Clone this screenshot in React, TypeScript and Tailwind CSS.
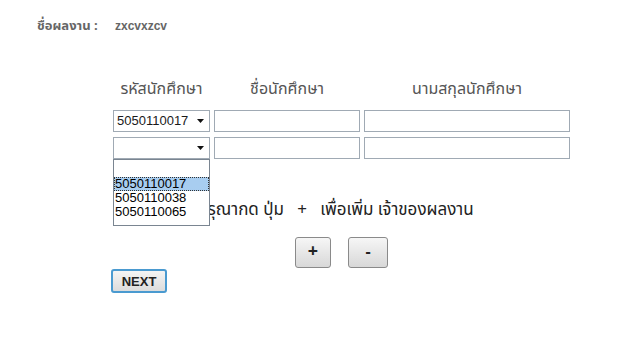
import React from 'react';

const Caret: React.FC = () => (
    <svg width="7" height="4" viewBox="0 0 7 4" className="shrink-0">
        <path d="M0 0h7L3.5 4z" fill="#111" />
    </svg>
);

const SelectBox: React.FC<{ value?: string }> = ({ value }) => (
    <div className="h-[22px] border border-[#a0aab4] bg-white flex items-center justify-between pl-[3px] pr-[5px] text-[13px] text-[#1a1a1a] font-['Liberation_Sans',sans-serif]">
        <span>{value ?? ''}</span>
        <Caret />
    </div>
);

const TextBox: React.FC = () => <div className="h-[22px] border border-[#a0aab4] bg-white" />;

const options = ['5050110017', '5050110038', '5050110065'];

const App: React.FC = () => {
    return (
        <div className="w-[620px] h-[346px] bg-white font-['Tahoma','Noto_Sans_Thai','Noto_Sans',sans-serif] text-[#333] overflow-hidden">
            <div className="flex items-baseline pl-[37px] pt-[17px] font-bold text-[#666]">
                <span className="w-[78px] text-[13px]">ชื่อผลงาน :</span>
                <span className="text-[12px] font-['Liberation_Sans',sans-serif]">zxcvxzcv</span>
            </div>

            <div className="ml-[113px] mt-[39px] w-[457px]">
                <div className="grid grid-cols-[97px_146px_206px] gap-x-[4px] text-[16px] text-[#555] text-center h-[26px] leading-[26px]">
                    <span>รหัสนักศึกษา</span>
                    <span>ชื่อนักศึกษา</span>
                    <span>นามสกุลนักศึกษา</span>
                </div>

                <div className="mt-[8px] grid grid-cols-[97px_146px_206px] gap-x-[4px] gap-y-[5px]">
                    <SelectBox value="5050110017" />
                    <TextBox />
                    <TextBox />
                    <div className="relative">
                        <SelectBox />
                        <div className="absolute left-0 top-[22px] w-[97px] h-[67px] border border-[#7a8591] bg-white text-[13px] leading-[14px] text-black z-10 font-['Liberation_Sans',sans-serif]">
                            <div className="h-[17px]" />
                            {options.map((o, i) => (
                                <div
                                    key={o}
                                    className={
                                        i === 0
                                            ? 'h-[14px] px-[1px] bg-[#a8cdf0] outline-1 outline-dotted outline-[#333] -outline-offset-1'
                                            : 'h-[14px] px-[1px]'
                                    }
                                >
                                    {o}
                                </div>
                            ))}
                        </div>
                    </div>
                    <TextBox />
                    <TextBox />
                </div>

                <p className="mt-[39px] pr-[12px] text-center text-[17px] text-[#222] leading-[24px]">
                    กรุณากด ปุ่ม &nbsp; + &nbsp; เพื่อเพิ่ม เจ้าของผลงาน
                </p>

                <div className="mt-[15px] flex justify-center gap-[17px]">
                    <button className="w-[36px] h-[31px] rounded-[3px] border border-[#8a8a8a] bg-gradient-to-b from-[#f6f6f6] to-[#d8d8d8] text-[18px] font-bold text-[#222] leading-none">
                        +
                    </button>
                    <button className="w-[40px] h-[31px] rounded-[3px] border border-[#8a8a8a] bg-gradient-to-b from-[#f6f6f6] to-[#d8d8d8] text-[16px] font-bold text-[#222] leading-none">
                        -
                    </button>
                </div>
            </div>

            <div className="ml-[111px] mt-[1px]">
                <button className="w-[56px] h-[24px] rounded-[3px] border-2 border-[#4a9ad0] bg-gradient-to-b from-[#f4f4f4] to-[#dcdcdc] text-[13px] font-bold text-[#222] font-['Liberation_Sans',sans-serif] leading-none">
                    NEXT
                </button>
            </div>
        </div>
    );
};

export default App;
